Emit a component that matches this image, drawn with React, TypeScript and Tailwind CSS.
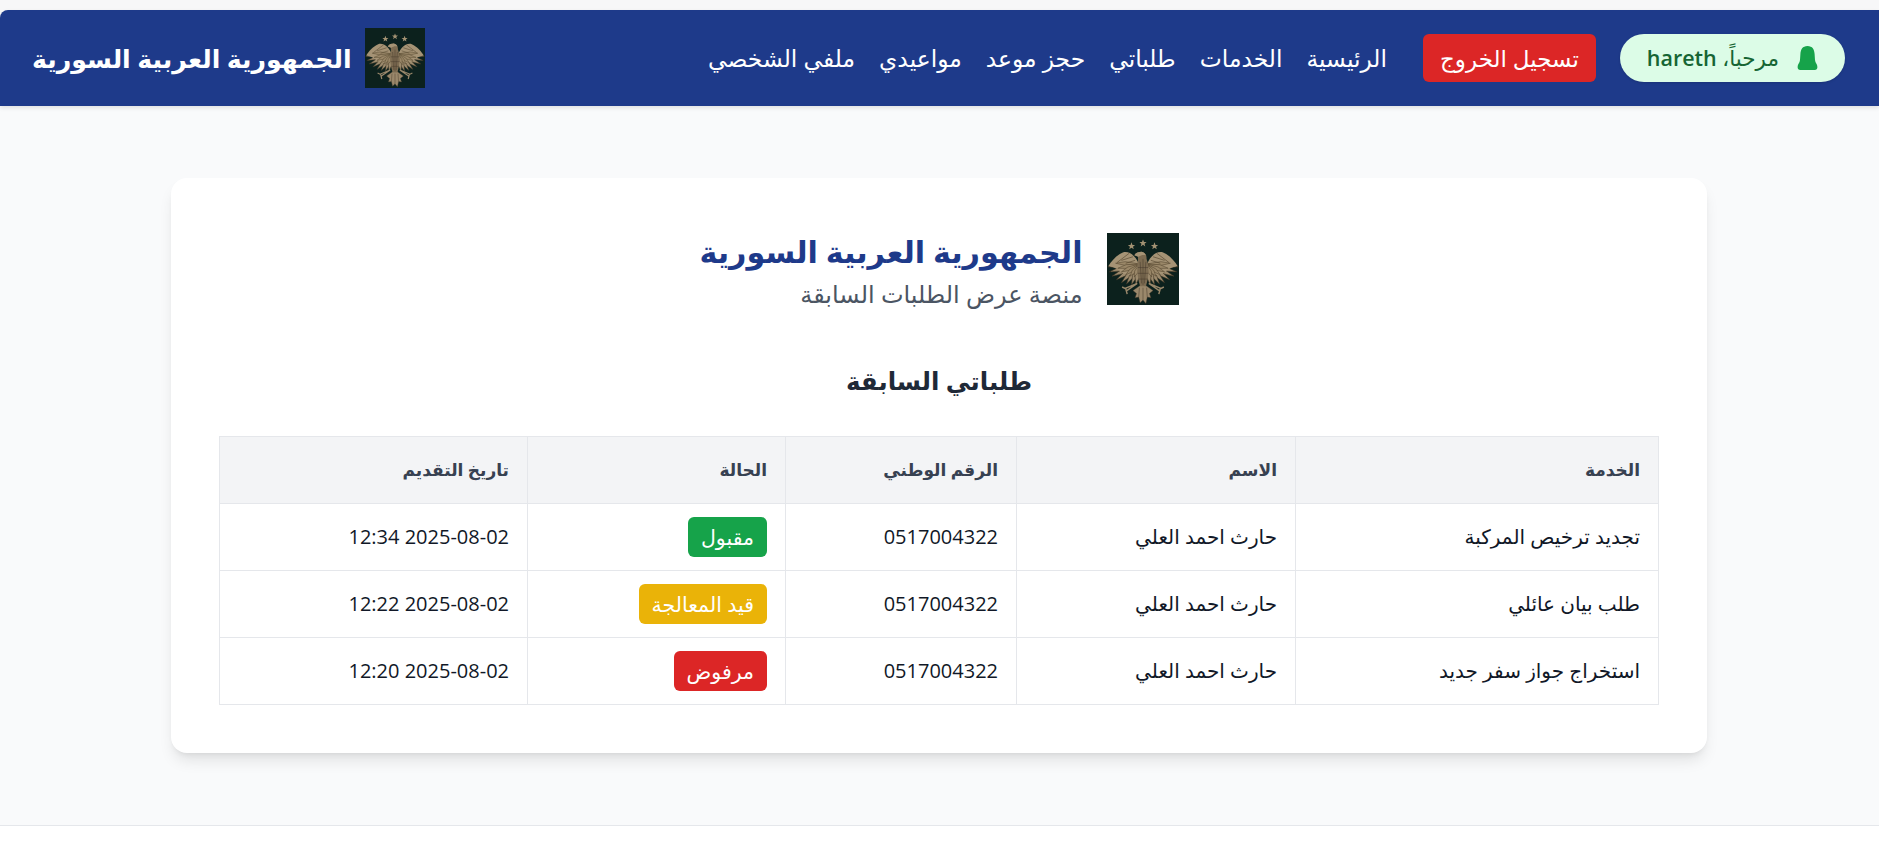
const font = "font-['Open_Sans','DejaVu_Sans',sans-serif]";

const root = [45, 43];
const primaries: [number, number][] = [
  [1, 47], [3, 54], [7, 60], [13, 65], [20, 69], [27, 71], [34, 72], [40, 72],
];
const coverts: [number, number][] = [
  [12, 42], [15, 49], [20, 54], [26, 58], [32, 60], [38, 61],
];

function feather(tip: [number, number], spread: number) {
  const [x, y] = tip;
  const dx = x - root[0];
  const dy = y - root[1];
  const len = Math.hypot(dx, dy);
  const nx = (-dy / len) * spread;
  const ny = (dx / len) * spread;
  const mx = root[0] + dx * 0.6;
  const my = root[1] + dy * 0.6;
  return `M${root[0]} ${root[1]} L${mx + nx} ${my + ny} L${x} ${y} L${mx - nx} ${my - ny} Z`;
}

function Wing() {
  return (
    <g>
      {primaries.map((t, i) => (
        <path key={i} d={feather(t, 3.2)} fill="#9c8a6d" stroke="#3d3222" strokeWidth="0.8" />
      ))}
      <path d="M44 43 C41 33 31 24 22 27 C13 31 6 39 2 46 C10 47 16 51 22 56 C30 60 38 58 44 52 Z" fill="#a59375" />
      {coverts.map((t, i) => (
        <path key={i} d={feather(t, 2.6)} fill="#9a8768" stroke="#4e4029" strokeWidth="0.7" />
      ))}
      <path d="M39 38 L26 42 M36 33 L20 38 M31 28 L14 41" stroke="#54462f" strokeWidth="0.9" fill="none" />
    </g>
  );
}

function Eagle({ size }: { size: number }) {
  return (
    <svg width={size} height={size} viewBox="0 0 100 100" className="shrink-0 block">
      <rect width="100" height="100" fill="#0c211d" />
      <g fill="#a39273">
        <polygon points="34,13 35.4,16.6 39,16.6 36.1,19 37.2,22.6 34,20.4 30.8,22.6 31.9,19 29,16.6 32.6,16.6" />
        <polygon points="50,9 51.4,12.6 55,12.6 52.1,15 53.2,18.6 50,16.4 46.8,18.6 47.9,15 45,12.6 48.6,12.6" />
        <polygon points="66,13 67.4,16.6 71,16.6 68.1,19 69.2,22.6 66,20.4 62.8,22.6 63.9,19 61,16.6 64.6,16.6" />
      </g>
      <Wing />
      <g transform="matrix(-1 0 0 1 100 0)">
        <Wing />
      </g>
      <path d="M50 70 L36 80 L41 84 L39 90 L44 89 L46 97 L50 93 L54 98 L56 89 L61 90 L59 84 L64 80 Z" fill="#9a886b" stroke="#43372a" strokeWidth="0.6" />
      <path d="M45 76 L44 89 M50 76 L50 93 M55 76 L56 89" stroke="#43372a" strokeWidth="0.7" fill="none" />
      <path d="M42 70 L25 77 L21 75 M42 70 L26 81 M26 77 L28 85" stroke="#9a886b" strokeWidth="2" fill="none" />
      <path d="M58 70 L75 77 L79 75 M58 70 L74 81 M74 77 L72 85" stroke="#9a886b" strokeWidth="2" fill="none" />
      <path d="M43 33 L38 31 C40 27 44 26 48 26 C53 27 55 30 55 36 C59 46 58 62 54 74 L46 74 C42 62 41 46 43 38 Z" fill="#7d6c52" />
      <path d="M46 40 L48 70 M50 36 L50 72 M54 40 L52 70 M43 48 L57 48 M43 56 L57 56 M44 64 L56 64" stroke="#43372a" strokeWidth="0.7" fill="none" />
      <path d="M44 33 L38 31 C40 27 44 26 48 26 C51 27 53 28 54 31 C50 30 47 31 44 33 Z" fill="#a59375" />
    </svg>
  );
}

const rows = [
  { service: "تجديد ترخيص المركبة", status: "مقبول", color: "bg-[#16a34a]", date: "12:34 2025-08-02" },
  { service: "طلب بيان عائلي", status: "قيد المعالجة", color: "bg-[#eab308]", date: "12:22 2025-08-02" },
  { service: "استخراج جواز سفر جديد", status: "مرفوض", color: "bg-[#dc2626]", date: "12:20 2025-08-02" },
];
const headers = ["الخدمة", "الاسم", "الرقم الوطني", "الحالة", "تاريخ التقديم"];
const links = ["الرئيسية", "الخدمات", "طلباتي", "حجز موعد", "مواعيدي", "ملفي الشخصي"];

export default function App() {
  return (
    <div dir="rtl" className={`min-h-screen bg-white ${font}`}>
      <div className="bg-[#f9fafb] border-b border-[#e5e7eb] h-[826px]">
        <div className="pt-[10px] bg-[#f7f7f8]">
          <header className="h-[96px] bg-[#1e3a8a] rounded-tl-[8px] shadow-[0_2px_4px_rgba(0,0,0,0.1)] pr-[34px] pl-[32px] flex items-center justify-between text-white">
            <div className="flex items-center">
              <div className="flex items-center gap-[24px] ml-[36px]">
                <div className="h-[48px] w-[225px] rounded-full bg-[#dcfce7] text-[#166534] flex items-center gap-[18px] pr-[27px] text-[21.5px] font-medium shadow-sm">
                  <svg width="21" height="24" viewBox="0 0 21 24" fill="#16a34a">
                    <path d="M10.5 0 C5.5 0 3.6 3.6 3.4 8 L3 14 C2.8 17 0.6 18 0.6 21 C0.6 23 1.6 24 3.2 24 L17.8 24 C19.4 24 20.4 23 20.4 21 C20.4 18 18.2 17 18 14 L17.6 8 C17.4 3.6 15.5 0 10.5 0 Z" />
                  </svg>
                  <span className="whitespace-nowrap pt-[1px]">مرحباً، <span className="font-semibold">hareth</span></span>
                </div>
                <button className="h-[48px] w-[173px] rounded-[6px] bg-[#dc2626] text-white text-[23px] flex items-center justify-center whitespace-nowrap pt-[1px]">
                  تسجيل الخروج
                </button>
              </div>
              <nav className="flex items-center gap-[24px] pt-[2px] text-[23.4px] text-white whitespace-nowrap">
                {links.map((l) => (
                  <a key={l}>{l}</a>
                ))}
              </nav>
            </div>
            <div className="flex items-center gap-[13px]">
              <Eagle size={60} />
              <span className="text-[25.2px] font-bold whitespace-nowrap pt-[1px]">الجمهورية العربية السورية</span>
            </div>
          </header>
        </div>
        <main className="pt-[72px] pr-px flex justify-center">
          <section className="w-[1536px] bg-white rounded-[16px] shadow-[0_10px_15px_-3px_rgba(0,0,0,0.1),0_4px_6px_-4px_rgba(0,0,0,0.1)] px-[48px] pb-[48px] pt-[44px]">
            <div className="flex items-center justify-center gap-[24px]">
              <Eagle size={72} />
              <div className="pt-[10px]">
                <h1 className="text-[30.2px] leading-[40px] font-bold text-[#1e3a8a]">الجمهورية العربية السورية</h1>
                <p className="text-[24px] leading-[43px] text-[#4b5563]">منصة عرض الطلبات السابقة</p>
              </div>
            </div>
            <h2 className="mt-[48px] mb-[37px] text-center text-[24.5px] leading-[36px] font-semibold text-[#1f2937]">طلباتي السابقة</h2>
            <table className="w-[1439px] table-fixed border-collapse text-[20px]">
              <colgroup>
                <col className="w-[363px]" />
                <col className="w-[279px]" />
                <col className="w-[231px]" />
                <col className="w-[258px]" />
                <col className="w-[308px]" />
              </colgroup>
              <thead>
                <tr className="h-[67px] bg-[#f3f4f6]">
                  {headers.map((h) => (
                    <th key={h} className="border border-[#e5e7eb] px-[18px] text-right text-[17px] font-semibold text-[#374151]">{h}</th>
                  ))}
                </tr>
              </thead>
              <tbody>
                {rows.map((r) => (
                  <tr key={r.date} className="h-[67px] text-[#111827]">
                    <td className="border border-[#e5e7eb] px-[18px]">{r.service}</td>
                    <td className="border border-[#e5e7eb] px-[18px]">حارث احمد العلي</td>
                    <td className="border border-[#e5e7eb] px-[18px]">0517004322</td>
                    <td className="border border-[#e5e7eb] px-[18px]">
                      <span className={`inline-flex h-[40px] items-center rounded-[6px] px-[13px] text-[20.5px] text-white ${r.color}`}>{r.status}</span>
                    </td>
                    <td className="border border-[#e5e7eb] px-[18px]" dir="ltr">
                      <div className="text-right">{r.date}</div>
                    </td>
                  </tr>
                ))}
              </tbody>
            </table>
          </section>
        </main>
      </div>
    </div>
  );
}
